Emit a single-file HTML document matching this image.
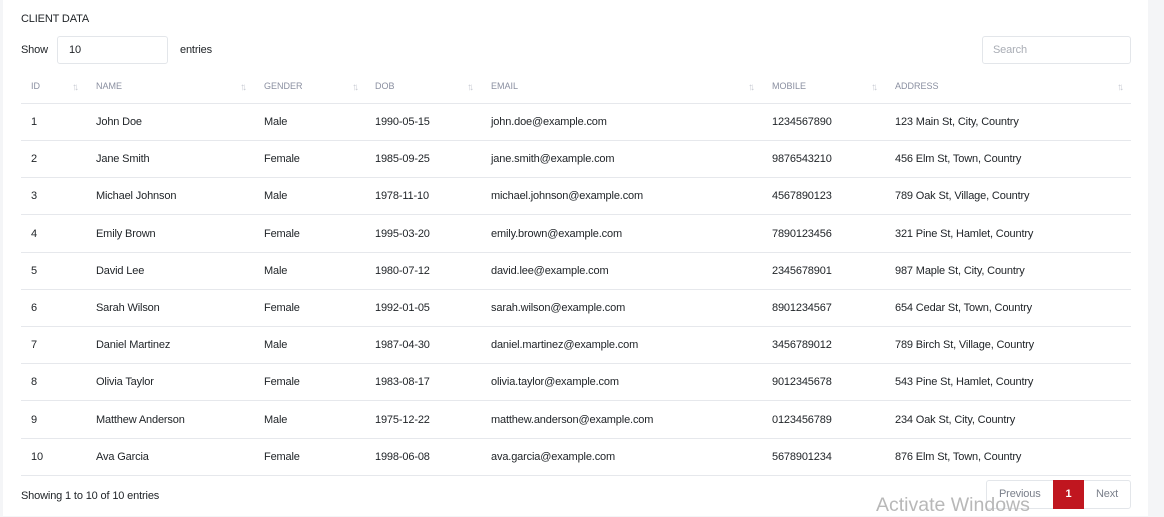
<!DOCTYPE html>
<html><head><style>
body{margin:0;width:1164px;height:516px;background:#f4f5f7;font-family:"Liberation Sans",Arial,sans-serif;font-size:11px;letter-spacing:-0.15px;color:#212529;position:relative;overflow:hidden}
.panel{position:absolute;left:3px;top:0;width:1145px;height:516px;background:#fff}
.abs{position:absolute}
.hd{position:absolute;top:81px;font-size:9px;color:#8a8fa0;letter-spacing:0}
.ar{position:absolute;top:82px;font-size:10px;color:#c8cbd3;letter-spacing:-3px}
.line{position:absolute;left:21px;width:1110px;height:1px;background:#e6e8ec}
.c{position:absolute;white-space:nowrap}
</style></head><body>
<div class="panel"></div>
<div class="abs" style="left:21px;top:13px">CLIENT DATA</div>
<div class="abs" style="left:21px;top:44px">Show</div>
<div class="abs" style="left:57px;top:36px;width:111px;height:28px;border:1px solid #e3e6ea;border-radius:3px;box-sizing:border-box;padding:7px 11px">10</div>
<div class="abs" style="left:180px;top:44px">entries</div>
<div class="abs" style="left:982px;top:36px;width:149px;height:28px;border:1px solid #e3e6ea;border-radius:3px;box-sizing:border-box;padding:7px 10px;color:#a9adb5">Search</div>
<div class="hd" style="left:31px">ID</div><div class="ar" style="left:72px">↑↓</div>
<div class="hd" style="left:96px">NAME</div><div class="ar" style="left:240px">↑↓</div>
<div class="hd" style="left:264px">GENDER</div><div class="ar" style="left:352px">↑↓</div>
<div class="hd" style="left:375px">DOB</div><div class="ar" style="left:467px">↑↓</div>
<div class="hd" style="left:491px">EMAIL</div><div class="ar" style="left:748px">↑↓</div>
<div class="hd" style="left:772px">MOBILE</div><div class="ar" style="left:871px">↑↓</div>
<div class="hd" style="left:895px">ADDRESS</div><div class="ar" style="left:1117px">↑↓</div>
<div class="line" style="top:103px"></div>
<div id="rows"></div>
<div class="abs" style="left:21px;top:490px">Showing 1 to 10 of 10 entries</div>
<div class="abs" style="left:986px;top:480px;width:145px;height:29px;border:1px solid #e3e6ea;border-radius:3px;box-sizing:border-box"></div>
<div class="abs" style="left:999px;top:488px;color:#7a7f8a">Previous</div>
<div class="abs" style="left:1053px;top:480px;width:31px;height:29px;background:#c0161f;color:#fff;text-align:center;line-height:29px;font-weight:bold">1</div>
<div class="abs" style="left:1096px;top:488px;color:#7a7f8a">Next</div>
<div class="abs" style="left:876px;top:494px;font-size:19.5px;letter-spacing:0;color:#b8b8b8">Activate Windows</div>
<script>
var d=[["1","John Doe","Male","1990-05-15","john.doe@example.com","1234567890","123 Main St, City, Country"],
["2","Jane Smith","Female","1985-09-25","jane.smith@example.com","9876543210","456 Elm St, Town, Country"],
["3","Michael Johnson","Male","1978-11-10","michael.johnson@example.com","4567890123","789 Oak St, Village, Country"],
["4","Emily Brown","Female","1995-03-20","emily.brown@example.com","7890123456","321 Pine St, Hamlet, Country"],
["5","David Lee","Male","1980-07-12","david.lee@example.com","2345678901","987 Maple St, City, Country"],
["6","Sarah Wilson","Female","1992-01-05","sarah.wilson@example.com","8901234567","654 Cedar St, Town, Country"],
["7","Daniel Martinez","Male","1987-04-30","daniel.martinez@example.com","3456789012","789 Birch St, Village, Country"],
["8","Olivia Taylor","Female","1983-08-17","olivia.taylor@example.com","9012345678","543 Pine St, Hamlet, Country"],
["9","Matthew Anderson","Male","1975-12-22","matthew.anderson@example.com","0123456789","234 Oak St, City, Country"],
["10","Ava Garcia","Female","1998-06-08","ava.garcia@example.com","5678901234","876 Elm St, Town, Country"]];
var xs=[31,96,264,375,491,772,895],h="";
d.forEach(function(r,i){var y=Math.round(116+i*37.2);r.forEach(function(t,j){h+='<div class="c" style="left:'+xs[j]+'px;top:'+y+'px">'+t+'</div>'});h+='<div class="line" style="top:'+Math.round(140+i*37.2)+'px"></div>'});
document.getElementById("rows").innerHTML=h;
</script>
</body></html>
